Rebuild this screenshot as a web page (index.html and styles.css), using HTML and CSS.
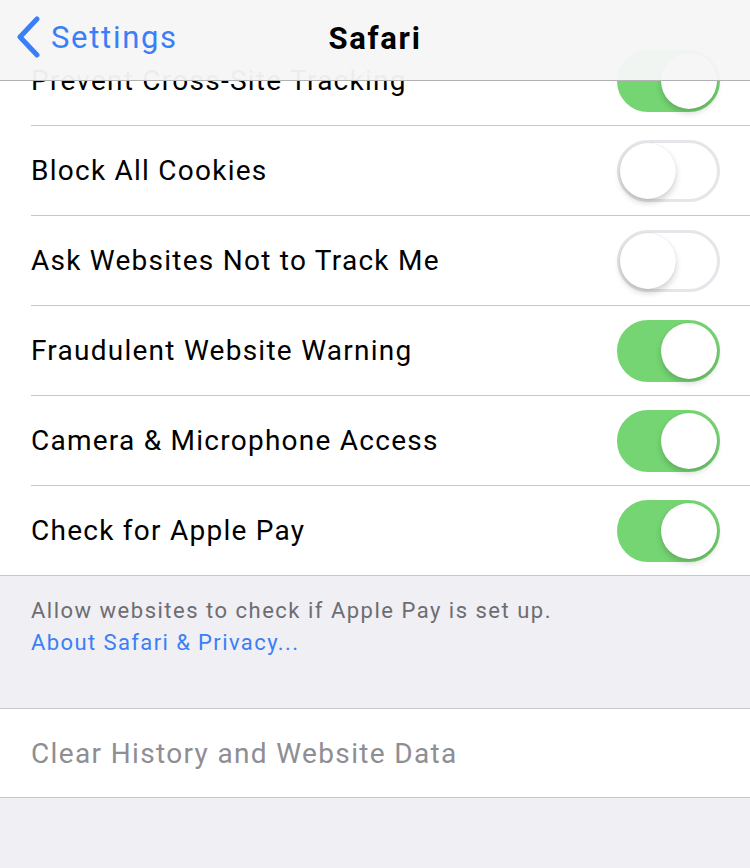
FILE: index.html
```html
<!DOCTYPE html>
<html>
<head>
<meta charset="utf-8">
<link rel="stylesheet" href="styles.css">
</head>
<body>
<div class="screen">
  <div class="navbar">
    <div class="back">
      <svg class="chev" width="26" height="42" viewBox="0 0 26 42"><path d="M22 3 L5 21 L22 39" fill="none" stroke="#3a7ff6" stroke-width="5" stroke-linecap="round" stroke-linejoin="round"/></svg>
      <span class="back-label">Settings</span>
    </div>
    <div class="title">Safari</div>
  </div>
  <div class="list">
    <div class="row"><span class="label">Prevent Cross-Site Tracking</span><span class="toggle on"><span class="knob"></span></span></div>
    <div class="row"><span class="label">Block All Cookies</span><span class="toggle"><span class="knob"></span></span></div>
    <div class="row"><span class="label">Ask Websites Not to Track Me</span><span class="toggle"><span class="knob"></span></span></div>
    <div class="row"><span class="label">Fraudulent Website Warning</span><span class="toggle on"><span class="knob"></span></span></div>
    <div class="row"><span class="label">Camera &amp; Microphone Access</span><span class="toggle on"><span class="knob"></span></span></div>
    <div class="row last"><span class="label">Check for Apple Pay</span><span class="toggle on"><span class="knob"></span></span></div>
  </div>
  <div class="footer">
    <div class="note">Allow websites to check if Apple Pay is set up.</div>
    <div class="link">About Safari &amp; Privacy...</div>
  </div>
  <div class="list single">
    <div class="row last"><span class="label muted">Clear History and Website Data</span></div>
  </div>
</div>
</body>
</html>
```
FILE: styles.css
```css
* { box-sizing: border-box; }
html, body { margin: 0; padding: 0; }
body {
  width: 750px;
  height: 868px;
  background: #efeff4;
  font-family: Roboto, "Liberation Sans", Arial, sans-serif;
  overflow: hidden;
}
.screen { position: relative; width: 750px; height: 868px; }
.navbar {
  position: absolute;
  top: 0; left: 0; right: 0;
  height: 81px;
  background: rgba(246,246,247,0.96);
  border-bottom: 1px solid #b2b2b2;
  z-index: 2;
  display: flex;
  align-items: center;
  justify-content: center;
}
.back {
  position: absolute;
  left: 15px;
  top: 16px;
  display: flex;
  align-items: center;
  gap: 10px;
  color: #3a7ff6;
}
.back-label { font-size: 31px; letter-spacing: 1.7px; }
.title { font-size: 31px; font-weight: 700; color: #000; margin-top: -4px; letter-spacing: 1.7px; }
.list {
  background: #fff;
  padding-top: 36px;
  border-bottom: 1px solid #c8c7cc;
}
.list.single { padding-top: 0; border-top: 1px solid #c8c7cc; }
.list.single .row.last { height: 88px; }
.row {
  height: 90px;
  margin-left: 31px;
  padding-right: 30px;
  display: flex;
  align-items: center;
  justify-content: space-between;
  border-bottom: 1px solid #c8c7cc;
}
.row.last { border-bottom: none; height: 89px; }
.label { font-size: 28px; color: #000; letter-spacing: 1.25px; }
.label.muted { color: #8e8e93; letter-spacing: 1.35px; }
.toggle {
  position: relative;
  width: 103px;
  height: 62px;
  border-radius: 31px;
  border: 3px solid #e5e5ea;
  background: #fff;
}
.toggle .knob {
  position: absolute;
  top: 0;
  left: 0;
  width: 56px;
  height: 56px;
  border-radius: 50%;
  background: #fff;
  box-shadow: 0 4px 6px rgba(0,0,0,0.18), 0 0 1px rgba(0,0,0,0.15);
}
.toggle.on { background: #75d572; border-color: #75d572; }
.toggle.on .knob { left: auto; right: 0; }
.footer {
  height: 132px;
  padding: 19px 31px 0;
}
.note { font-size: 22px; color: #6d6d72; line-height: 32px; letter-spacing: 1.5px; }
.link { font-size: 22px; color: #3a7ff6; line-height: 32px; letter-spacing: 1.4px; }
```
